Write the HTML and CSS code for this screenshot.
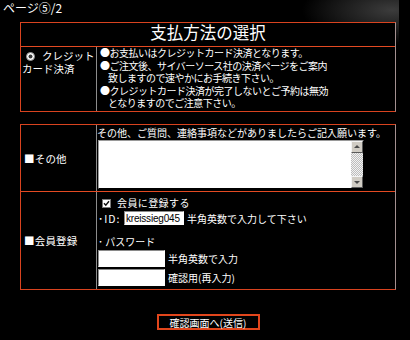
FILE: index.html
```html
<!DOCTYPE html>
<html lang="ja">
<head>
<meta charset="utf-8">
<title>支払方法の選択</title>
<link rel="stylesheet" href="styles.css">
</head>
<body>
<div class="page">
  <div class="crumb">ページ⑤/2</div>

  <div class="box">
    <div class="title">支払方法の選択</div>
    <div class="row row-pay">
      <div class="lcell lcell-top">
        <svg class="radio" width="9" height="9" viewBox="0 0 9 9"><circle cx="4.5" cy="4.5" r="4" fill="#fff" stroke="#8a8a8a"/><circle cx="4.5" cy="4.5" r="2" fill="#3a3a3a"/></svg><span class="radio-label">クレジット</span><br>カード決済
      </div>
      <div class="rcell notes">
        <p>●お支払いはクレジットカード決済となります。</p>
        <p>●ご注文後、サイバーソース社の決済ページをご案内<br>致しますので速やかにお手続き下さい。</p>
        <p>●クレジットカード決済が完了しないとご予約は無効<br>となりますのでご注意下さい。</p>
      </div>
    </div>
  </div>

  <div class="box box2">
    <div class="row row-other">
      <div class="lcell lcell-mid">■その他</div>
      <div class="rcell other">
        <div class="line">その他、ご質問、連絡事項などがありましたらご記入願います。</div>
        <div class="tawrap">
          <textarea class="ta"></textarea>
          <div class="sb">
            <div class="sbbtn"><svg width="10" height="10" viewBox="0 0 10 10"><path d="M2 6 L5 3 L8 6 Z" fill="#4a4a4a"/></svg></div>
            <div class="sbtrack"></div>
            <div class="sbbtn"><svg width="10" height="10" viewBox="0 0 10 10"><path d="M2 4 L5 7 L8 4 Z" fill="#4a4a4a"/></svg></div>
          </div>
        </div>
      </div>
    </div>
    <div class="row row-member">
      <div class="lcell lcell-mid">■会員登録</div>
      <div class="rcell member">
        <div class="line chk-line">
          <svg class="chk" width="9" height="9" viewBox="0 0 9 9"><rect x="0.5" y="0.5" width="8" height="8" fill="#fff" stroke="#7a7a7a"/><path d="M2 4.2 L3.8 6.2 L7 2.2" fill="none" stroke="#111" stroke-width="1.4"/></svg><span>会員に登録する</span>
        </div>
        <div class="id-line">
          <span class="lbl">･ID:</span><input class="inp inp-id" type="text" value="kreissieg045"><span>半角英数で入力して下さい</span>
        </div>
        <div class="line pw-label">･ パスワード</div>
        <div class="pw-line">
          <input class="inp inp-pw" type="password"><span>半角英数で入力</span>
        </div>
        <div class="pw-line">
          <input class="inp inp-pw" type="password"><span>確認用(再入力)</span>
        </div>
      </div>
    </div>
  </div>

  <div class="actions">
    <button class="submit" type="button">確認画面へ(送信)</button>
  </div>
</div>
</body>
</html>
```

FILE: styles.css
```css
* {
  box-sizing: border-box;
  margin: 0;
  padding: 0;
}

html,
body {
  background: #000;
}

body {
  width: 410px;
  height: 340px;
  overflow: hidden;
  color: #fff;
  font-family: "Noto Sans CJK JP", "Noto Sans", sans-serif;
  font-size: 10px;
}

.page {
  width: 399px;
  height: 340px;
  padding-left: 20px;
  background:
    radial-gradient(90px 34px at 392px 10px, #3c3c3c 0%, #1c1c1c 55%, transparent 100%),
    #000;
}

.crumb {
  height: 22px;
  margin-left: -17px;
  font-size: 12px;
  line-height: 16px;
}

.box {
  width: 376px;
  border: 1px solid #d9431f;
  border-right-color: #a49090;
  background: #000;
}

.box > * + * {
  border-top: 1px solid #e44a22;
}

.box2 {
  margin-top: 12px;
}

.title {
  height: 23px;
  line-height: 18px;
  text-align: center;
  font-size: 16.5px;
}

.row {
  display: flex;
}

.row-pay {
  height: 65px;
}

.row-other {
  height: 66px;
}

.row-member {
  height: 98px;
}

.lcell {
  width: 76px;
  flex: none;
  border-right: 1px solid #8c8c8c;
  padding-left: 1px;
  font-size: 10.5px;
}

.lcell-top {
  padding-top: 3px;
  line-height: 12.5px;
}

.lcell-mid {
  display: flex;
  align-items: center;
  padding-left: 3px;
  letter-spacing: 0.2px;
}

.radio {
  display: inline-block;
  vertical-align: -1px;
  margin-left: 4px;
  margin-right: 7px;
}

.rcell {
  flex: 1;
  min-width: 0;
}

.notes {
  padding-left: 3px;
  line-height: 12.5px;
  letter-spacing: -0.5px;
}

.notes p {
  padding-left: 8px;
  text-indent: -8px;
}

.other {
  padding-top: 2px;
}

.line {
  height: 12px;
  line-height: 12px;
  white-space: nowrap;
}

.tawrap {
  display: flex;
  width: 266px;
  height: 49px;
  margin-top: 1px;
  margin-left: 1px;
  border-top: 1px solid #9a9a9a;
  border-left: 1px solid #9a9a9a;
  border-right: 1px solid #000;
  border-bottom: 1px solid #000;
  background: #fff;
}

.ta {
  flex: 1;
  border: none;
  outline: none;
  resize: none;
  background: #fff;
}

.sb {
  width: 12px;
  display: flex;
  flex-direction: column;
}

.sbbtn {
  height: 12px;
  display: flex;
  align-items: center;
  justify-content: center;
  background: #d0ccc4;
  border: 1px solid;
  border-color: #f4f4f4 #5a5a5a #5a5a5a #f4f4f4;
}

.sbtrack {
  flex: 1;
  background: repeating-conic-gradient(#bdbdbd 0 25%, #f2f2f2 0 50%) 0 0 / 2px 2px;
}

.member {
  padding-top: 5px;
  padding-left: 1px;
}

.chk-line {
  display: flex;
  align-items: center;
}

.chk {
  margin-left: 4px;
  margin-right: 6px;
}

.chk-line span {
  letter-spacing: 0.4px;
}

.id-line {
  display: flex;
  align-items: center;
  height: 14px;
  margin-top: 2px;
  white-space: nowrap;
}

.lbl {
  width: 26px;
  letter-spacing: 1px;
  font-size: 10.5px;
}

.inp {
  appearance: none;
  border: 1px solid #fff;
  border-top-color: #8a8a8a;
  border-left-color: #8a8a8a;
  background: #fff;
  color: #000;
  outline: none;
  font-family: "Liberation Sans", sans-serif;
  font-size: 10px;
  padding: 0 1px;
}

.inp-id {
  width: 60px;
  height: 14px;
  margin-right: 3px;
  letter-spacing: -0.2px;
}

.pw-label {
  margin-top: 11px;
}

.pw-line {
  display: flex;
  align-items: center;
  height: 17px;
  margin-top: 2px;
  white-space: nowrap;
}

.inp-pw {
  width: 67px;
  height: 17px;
  margin-right: 3px;
}

.actions {
  width: 376px;
  margin-top: 24px;
  display: flex;
  justify-content: center;
}

.submit {
  width: 103px;
  height: 16px;
  border: 2px solid #e2461c;
  background: #000;
  color: #fff;
  font-family: "Noto Sans CJK JP", "Noto Sans", sans-serif;
  font-size: 10px;
  line-height: 11px;
  padding: 0;
}
```
